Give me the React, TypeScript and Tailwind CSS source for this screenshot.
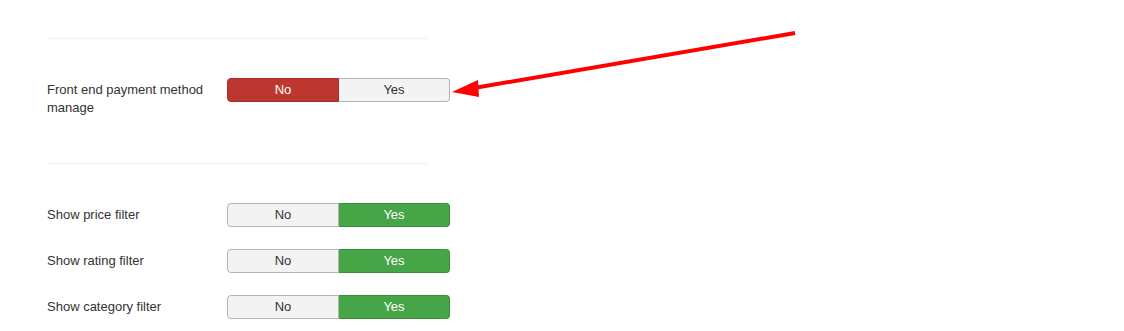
import React from 'react';

interface ToggleProps {
  value: boolean;
}

const Toggle: React.FC<ToggleProps> = ({ value }) => {
  return (
    <div className="flex w-[223px] h-[24px] text-[13px] leading-[22px]">
      <div
        className={
          value
            ? 'flex-1 text-center rounded-l-[4px] border border-[#b3b3b3] bg-[#f3f3f3] text-[#333]'
            : 'flex-1 text-center rounded-l-[4px] border border-[#a2302a] bg-[#bd362f] text-white'
        }
      >
        No
      </div>
      <div
        className={
          value
            ? 'flex-1 text-center rounded-r-[4px] border border-l-0 border-[#3d8f3d] bg-[#46a546] text-white'
            : 'flex-1 text-center rounded-r-[4px] border border-l-0 border-[#b3b3b3] bg-[#f3f3f3] text-[#333]'
        }
      >
        Yes
      </div>
    </div>
  );
};

const Row: React.FC<{ label: string; value: boolean }> = ({ label, value }) => (
  <div className="flex items-start">
    <div className="w-[180px] pr-[20px] pt-[3px] text-[13px] leading-[18px] text-[#333]">{label}</div>
    <Toggle value={value} />
  </div>
);

export default function App() {
  return (
    <div
      className="relative w-[1124px] h-[331px] bg-white overflow-hidden pl-[47px]"
      style={{ fontFamily: '"Liberation Sans", Arial, sans-serif' }}
    >
      <div className="w-[380px] h-px bg-[#eeeeee] mt-[38px]" />

      <div className="mt-[39px]">
        <Row label="Front end payment method manage" value={false} />
      </div>

      <div className="w-[380px] h-px bg-[#eeeeee] mt-[46px]" />

      <div className="mt-[39px] flex flex-col gap-[22px]">
        <Row label="Show price filter" value={true} />
        <Row label="Show rating filter" value={true} />
        <Row label="Show category filter" value={true} />
      </div>

      {/* annotation arrow */}
      <svg className="absolute left-0 top-0 pointer-events-none" width="1124" height="331">
        <line x1="795" y1="33" x2="474" y2="88" stroke="#ff0000" strokeWidth="4" />
        <polygon points="452,92 478,80 479,97" fill="#ff0000" />
      </svg>
    </div>
  );
}
